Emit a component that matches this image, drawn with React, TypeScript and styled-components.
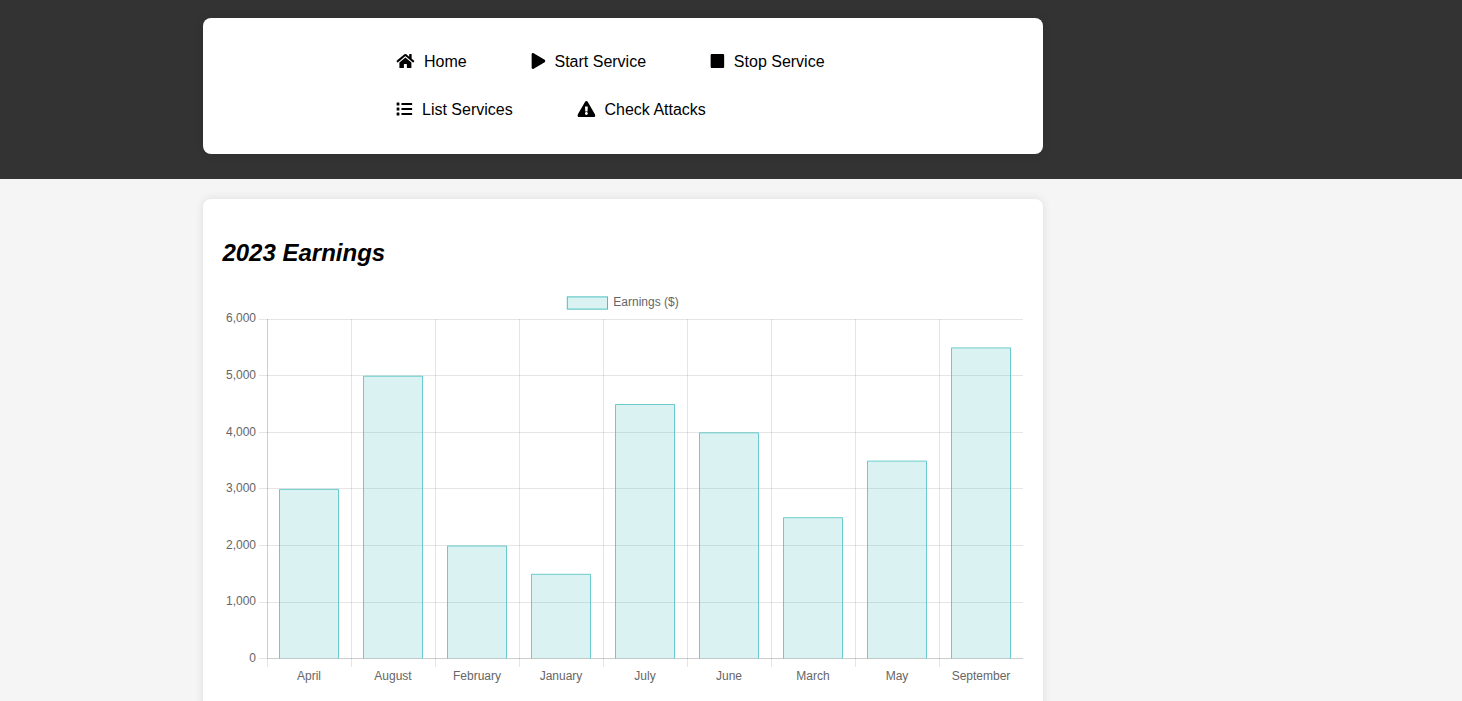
import React from 'react';
import styled, { createGlobalStyle } from 'styled-components';
import { FaHome, FaPlay, FaStop, FaList, FaExclamationTriangle } from 'react-icons/fa';

const GlobalStyle = createGlobalStyle`
  html, body { margin: 0; height: 100%; overflow: hidden; }
  body {
    background: #f5f5f5;
    color: #000;
    font-family: Arial, "Liberation Sans", sans-serif;
    font-size: 16px;
  }
`;

const Page = styled.div`
  height: 701px;
  overflow: hidden;
`;

const Header = styled.header`
  height: 179px;
  box-sizing: border-box;
  padding-top: 18px;
  background: #333;
`;

const Card = styled.section`
  width: 840px;
  box-sizing: border-box;
  margin-left: 203px;
  background: #fff;
  border-radius: 8px;
  box-shadow: 0 0 10px rgba(0, 0, 0, 0.1);
`;

const NavCard = styled(Card)`
  height: 136px;
  padding: 20px 193.2px;
`;

const ChartCard = styled(Card)`
  height: 540px;
  margin-top: 20px;
  padding: 20px;
`;

const Nav = styled.nav`
  display: flex;
  flex-wrap: wrap;
  column-gap: 64px;
`;

const NavLink = styled.a`
  display: flex;
  align-items: center;
  height: 48px;
  gap: 9.8px;
  color: #000;
  white-space: nowrap;
  text-decoration: none;
`;

const IconBox = styled.span<{ $width: number }>`
  display: flex;
  justify-content: center;
  flex: none;
  width: ${(p) => p.$width}px;
  padding-bottom: 2px;

  svg {
    width: ${(p) => p.$width}px;
    height: 16px;
    transform: translateX(0.4px);
  }
`;

const Title = styled.h2`
  margin: 20px 0 20px -0.6px;
  font-size: 24px;
  line-height: 27px;
  font-style: italic;
  font-weight: bold;
`;

const Chart = styled.svg`
  display: block;
  width: 800px;
  height: 400px;
  font-family: Arial, "Liberation Sans", sans-serif;
  font-size: 12px;
  fill: #666;
`;

const links = [
  { label: 'Home', icon: FaHome, width: 18 },
  { label: 'Start Service', icon: FaPlay, width: 14 },
  { label: 'Stop Service', icon: FaStop, width: 14 },
  { label: 'List Services', icon: FaList, width: 16 },
  { label: 'Check Attacks', icon: FaExclamationTriangle, width: 18 },
];

const earnings: [string, number][] = [
  ['April', 3000],
  ['August', 5000],
  ['February', 2000],
  ['January', 1500],
  ['July', 4500],
  ['June', 4000],
  ['March', 2500],
  ['May', 3500],
  ['September', 5500],
];

const LEFT = 44.5;
const RIGHT = 800;
const BASE = 373.2;
const STEP = 84;

// Gridlines sit on half pixels; labels keep their own baselines.
const ticks = [
  { value: 6000, line: 33.5, label: 36 },
  { value: 5000, line: 89.5, label: 93 },
  { value: 4000, line: 146.5, label: 150 },
  { value: 3000, line: 202.5, label: 206 },
  { value: 2000, line: 259.5, label: 263 },
  { value: 1000, line: 316.5, label: 319 },
  { value: 0, line: 372.5, label: 376 },
];

const yFor = (value: number) => BASE - value * 0.0566;

function EarningsChart() {
  return (
    <Chart viewBox="0 0 800 400">
      <rect x="344.3" y="10.9" width="40.2" height="12.2" fill="rgba(75,192,192,0.2)" stroke="rgb(75,192,192)" />
      <text x="390.3" y="20">Earnings ($)</text>

      {ticks.map(({ value, line, label }) => (
        <g key={value}>
          <line x1={LEFT - 8.5} x2={RIGHT} y1={line} y2={line} stroke="rgba(0,0,0,0.1)" />
          {value === 0 && (
            <line x1={LEFT} x2={RIGHT} y1={line} y2={line} stroke="rgba(0,0,0,0.1)" />
          )}
          <text x="33" y={label} textAnchor="end">{value.toLocaleString('en-US')}</text>
        </g>
      ))}

      {earnings.map(([month], i) => {
        const x = LEFT + i * STEP;
        return (
          <g key={month}>
            <line x1={x} x2={x} y1={33} y2={381} stroke="rgba(0,0,0,0.1)" />
            {i === 0 && <line x1={x} x2={x} y1={33} y2={372} stroke="rgba(0,0,0,0.1)" />}
            <text x={x + 41.5} y="394" textAnchor="middle">{month}</text>
          </g>
        );
      })}

      {earnings.map(([month, value], i) => {
        const x = LEFT + i * STEP + 12;
        const y = yFor(value);
        return (
          <g key={month}>
            <rect x={x - 0.3} y={y} width="59.6" height={372.5 - y} fill="rgba(75,192,192,0.2)" />
            <path d={`M${x} 372.5V${y}H${x + 59}V372.5`} fill="none" stroke="rgb(75,192,192)" strokeOpacity="0.8" />
          </g>
        );
      })}
    </Chart>
  );
}

export default function App() {
  return (
    <Page>
      <GlobalStyle />
      <Header>
        <NavCard>
          <Nav>
            {links.map(({ label, icon: Icon, width }) => (
              <NavLink key={label}>
                <IconBox $width={width}><Icon /></IconBox>
                {label}
              </NavLink>
            ))}
          </Nav>
        </NavCard>
      </Header>
      <ChartCard>
        <Title>2023 Earnings</Title>
        <EarningsChart />
      </ChartCard>
    </Page>
  );
}
